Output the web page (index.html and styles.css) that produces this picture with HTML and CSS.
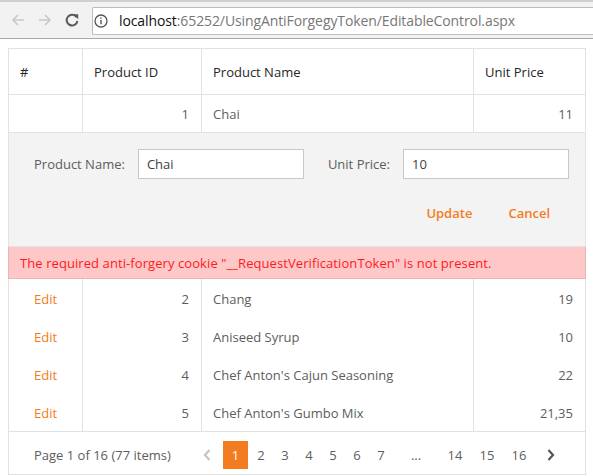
FILE: index.html
```html
<!DOCTYPE html>
<html>
<head>
<meta charset="utf-8">
<link rel="stylesheet" href="styles.css">
</head>
<body>
<div class="chrome">
  <div class="nav">
    <svg class="ic" width="16" height="16" viewBox="0 0 16 16"><path d="M14 8H3M8 3L3 8l5 5" fill="none" stroke="#c8c8c8" stroke-width="1.6"/></svg>
    <svg class="ic" width="16" height="16" viewBox="0 0 16 16"><path d="M2 8h11M8 3l5 5-5 5" fill="none" stroke="#c8c8c8" stroke-width="1.6"/></svg>
    <svg class="ic" width="16" height="16" viewBox="0 0 16 16"><path d="M12.6 5.2A5.4 5.4 0 1 0 13.4 9" fill="none" stroke="#5a5a5a" stroke-width="2"/><path d="M9.2 2.2h5v5z" fill="#5a5a5a"/></svg>
  </div>
  <div class="omni">
    <svg class="info" width="14" height="14" viewBox="0 0 14 14"><circle cx="7" cy="7" r="6" fill="none" stroke="#555" stroke-width="1.3"/><rect x="6.3" y="6" width="1.4" height="4.3" fill="#555"/><rect x="6.3" y="3.4" width="1.4" height="1.4" fill="#555"/></svg>
    <span class="host">localhost</span><span class="path">:65252/UsingAntiForgegyToken/EditableControl.aspx</span>
  </div>
</div>
<div class="page">
  <table class="grid">
    <colgroup><col class="c1"><col class="c2"><col class="c3"><col class="c4"></colgroup>
    <thead>
      <tr class="head"><th>#</th><th>Product ID</th><th>Product Name</th><th>Unit Price</th></tr>
    </thead>
    <tbody>
      <tr class="row first"><td></td><td class="num">1</td><td>Chai</td><td class="num">11</td></tr>
      <tr class="edit"><td colspan="4">
        <div class="form">
          <div class="fields">
            <label class="lbl">Product Name:</label><div class="inp">Chai</div>
            <label class="lbl lbl2">Unit Price:</label><div class="inp">10</div>
          </div>
          <div class="btns"><a class="btn">Update</a><a class="btn">Cancel</a></div>
        </div>
      </td></tr>
      <tr class="err"><td colspan="4">The required anti-forgery cookie "__RequestVerificationToken" is not present.</td></tr>
      <tr class="row"><td class="link">Edit</td><td class="num">2</td><td>Chang</td><td class="num">19</td></tr>
      <tr class="row"><td class="link">Edit</td><td class="num">3</td><td>Aniseed Syrup</td><td class="num">10</td></tr>
      <tr class="row"><td class="link">Edit</td><td class="num">4</td><td>Chef Anton's Cajun Seasoning</td><td class="num">22</td></tr>
      <tr class="row"><td class="link">Edit</td><td class="num">5</td><td>Chef Anton's Gumbo Mix</td><td class="num">21,35</td></tr>
      <tr class="pager"><td colspan="4">
        <div class="pg">
          <span class="summary">Page 1 of 16 (77 items)</span>
          <div class="pages">
            <svg class="arr" width="10" height="14" viewBox="0 0 10 14"><path d="M7.5 2L3 7l4.5 5" fill="none" stroke="#c4c4c4" stroke-width="2.2"/></svg>
            <span class="pn cur">1</span><span class="pn">2</span><span class="pn">3</span><span class="pn">4</span><span class="pn">5</span><span class="pn">6</span><span class="pn">7</span><span class="pn dots">...</span><span class="pn w">14</span><span class="pn w">15</span><span class="pn w">16</span>
            <svg class="arr" width="10" height="14" viewBox="0 0 10 14"><path d="M2.5 2L7 7l-4.5 5" fill="none" stroke="#555" stroke-width="2.2"/></svg>
          </div>
        </div>
      </td></tr>
    </tbody>
  </table>
</div>
</body>
</html>
```
FILE: styles.css
```css
html, body { margin: 0; padding: 0; background: #fff; }
body { font-family: "Open Sans", "Liberation Sans", sans-serif; }
.chrome {
  height: 36px;
  background: #f2f2f2;
  border-top: 2px solid #cfcfcf;
  border-bottom: 1px solid #a9a9a9;
  display: flex;
  align-items: center;
}
.nav { display: flex; align-items: center; gap: 11px; padding-left: 10px; width: 92px; box-sizing: border-box; }
.omni {
  flex: 1;
  height: 26px;
  margin-top: 1px;
  background: #fff;
  border: 1px solid #bdbdbd;
  border-right: none;
  border-radius: 2px 0 0 2px;
  display: flex;
  align-items: center;
  font-size: 14px;
  letter-spacing: -0.1px;
}
.info { margin: 0 11px 0 1px; }
.host { color: #111; }
.path { color: #777; }
.page { padding: 9px 8px 0 8px; }
.grid {
  border-collapse: collapse;
  width: 577px;
  table-layout: fixed;
  font-size: 13px;
  color: #5d5d5d;
}
.c1 { width: 74px; } .c2 { width: 119px; } .c3 { width: 272px; } .c4 { width: 112px; }
.grid th, .grid td { border: 1px solid #e2e2e2; padding: 0 11px; text-align: left; white-space: nowrap; }
.grid th { font-weight: normal; color: #262626; height: 45px; }
.row td { height: 38px; border-top: none; border-bottom: none; }
.row.first td { height: 37px; }
.row:not(.first) td { padding-top: 2px; height: 36px; }
.num { text-align: right !important; padding-right: 12px !important; }
.link { color: #f47c20; text-align: center !important; padding-left: 0 !important; padding-right: 0 !important; }
.edit td { background: #f3f3f3; padding: 0; }
.form { height: 113px; padding: 16px 0 0 25px; box-sizing: border-box; }
.fields { display: flex; align-items: center; }
.lbl { margin-right: 13px; color: #5d5d5d; }
.lbl2 { margin-left: 24px; }
.inp {
  width: 166px; height: 30px; box-sizing: border-box;
  background: #fff; border: 1px solid #c8c8c8;
  padding-left: 8px; line-height: 28px; color: #404040;
}
.btns { display: flex; justify-content: flex-end; gap: 36px; padding-right: 35px; margin-top: 25px; }
.btn { color: #f47c20; font-weight: 600; }
.err td { background: #ffc8c8; color: #ff1a1a; height: 31px; padding-left: 11px; border-color: #e9b4b4; letter-spacing: 0.08px; }
.pager td { height: 42px; padding: 0; }
.pg { display: flex; align-items: center; padding-top: 3px; }
.summary { margin-left: 25px; width: 168px; }
.pages { display: flex; align-items: center; }
.arr { margin-right: 11px; }
.pn { width: 24px; text-align: center; line-height: 28px; }
.pn.cur { width: 25px; background: #f47c20; color: #fff; margin-right: 1px; }
.pn.dots { width: 46px; line-height: 36px; }
.pn.w { width: 32px; }
.pages .arr:last-child { margin-left: 11px; margin-right: 0; }
```
